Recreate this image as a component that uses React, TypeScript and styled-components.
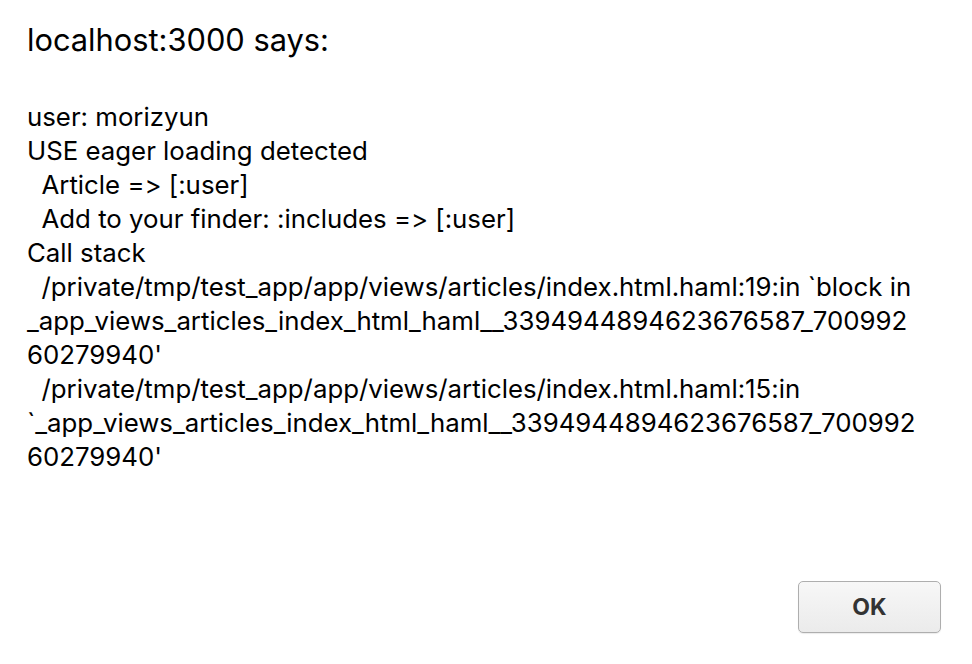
import styled, { createGlobalStyle } from "styled-components";

const GlobalStyle = createGlobalStyle`
	html, body {
		margin: 0;
		padding: 0;
		background: #ffffff;
	}
`;

const Dialog = styled.div`
	display: flex;
	flex-direction: column;
	height: 664px;
	box-sizing: border-box;
	padding: 0 31px 31px 27px;
	font-family: Inter, "Liberation Sans", sans-serif;
	font-feature-settings: "calt" 0, "liga" 0;
	color: #000000;
`;

const Title = styled.h1`
	margin: 22px 0 0 0;
	font-size: 30.8px;
	font-weight: 400;
	line-height: 36px;
`;

const Message = styled.div`
	margin-top: 42px;
	font-size: 25.8px;
	line-height: 34px;
	white-space: pre;
`;

const Footer = styled.div`
	margin-top: auto;
	display: flex;
	justify-content: flex-end;
`;

const OkButton = styled.button`
	width: 143px;
	height: 52px;
	border: 1px solid #aeaeae;
	border-radius: 5px;
	background: linear-gradient(#f7f7f7, #ebebeb);
	box-shadow: 0 1px 1px rgba(0, 0, 0, 0.08);
	font-family: Inter, "Liberation Sans", sans-serif;
	font-size: 23px;
	font-weight: 700;
	color: #333333;
`;

const lines = [
	"user: morizyun",
	"USE eager loading detected",
	"  Article => [:user]",
	"  Add to your finder: :includes => [:user]",
	"Call stack",
	"  /private/tmp/test_app/app/views/articles/index.html.haml:19:in `block in",
	"_app_views_articles_index_html_haml__3394944894623676587_700992",
	"60279940'",
	"  /private/tmp/test_app/app/views/articles/index.html.haml:15:in",
	"`_app_views_articles_index_html_haml__3394944894623676587_700992",
	"60279940'",
];

export default function App() {
	return (
		<>
			<GlobalStyle />
			<Dialog>
				<Title>localhost:3000 says:</Title>
				<Message>{lines.join("\n")}</Message>
				<Footer>
					<OkButton>OK</OkButton>
				</Footer>
			</Dialog>
		</>
	);
}
